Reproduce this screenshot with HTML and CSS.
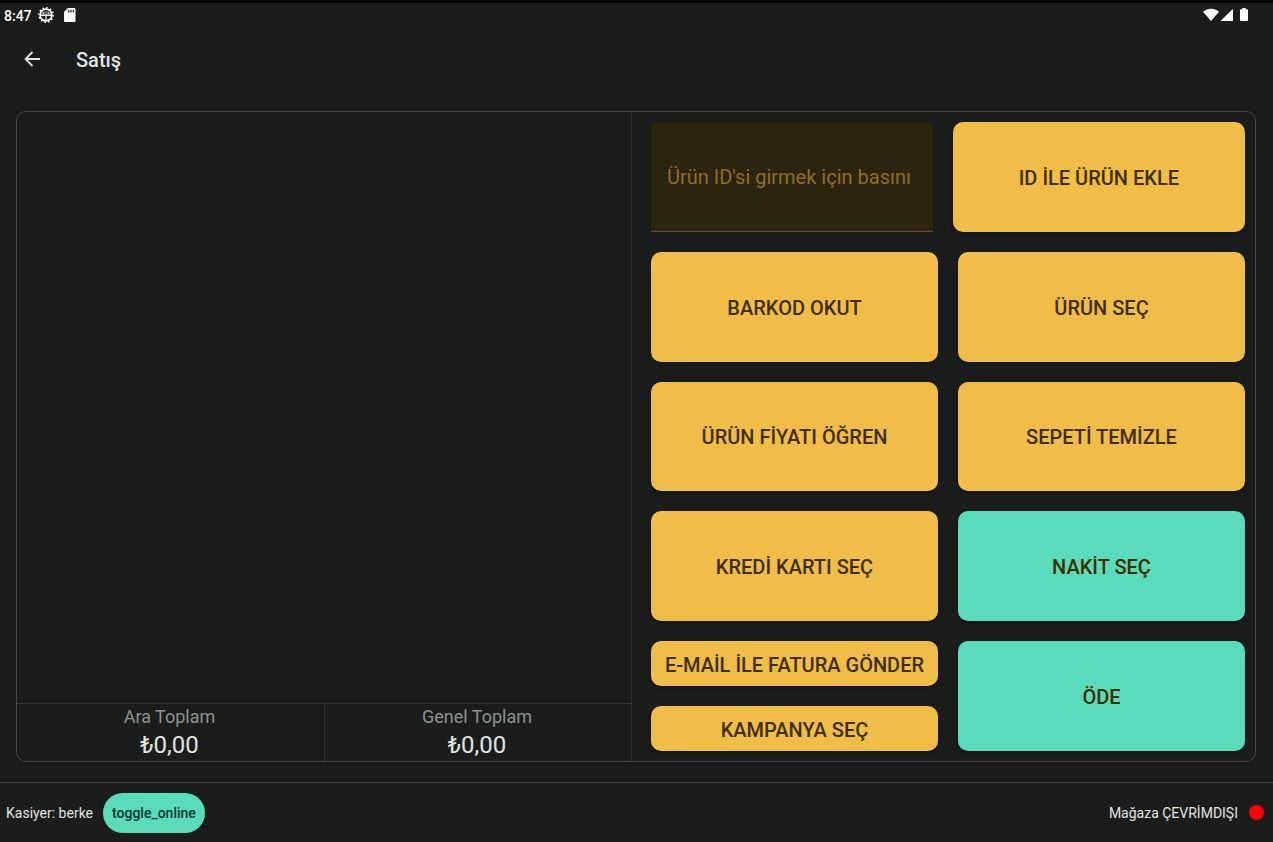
FILE: index.html
```html
<!DOCTYPE html>
<html lang="tr">
<head>
<meta charset="utf-8">
<meta name="viewport" content="width=device-width, initial-scale=1">
<title>Satış</title>
<link rel="stylesheet" href="styles.css">
</head>
<body>
<div class="status-bar">
  <div class="status-group">
    <span class="clock">8:47</span>
    <svg class="status-icon" width="16" height="16" viewBox="0 0 16 16" aria-hidden="true">
      <circle cx="8" cy="8" r="7.200" fill="none" stroke="#fff" stroke-width="1.400" stroke-dasharray="1.600 2.170"/>
      <circle cx="8" cy="8" r="5.900" fill="none" stroke="#fff" stroke-width="1.600"/>
      <path d="M2.500 8.200h11" stroke="#fff" stroke-width="1.400"/>
      <path d="M8 8.200V13.500" stroke="#fff" stroke-width="1.200"/>
      <path d="M3.500 7.500a4.500 3.500 0 0 1 9 0z" fill="#fff" opacity=".3"/>
      <path d="M5.500 5.500v1.200M10.500 5.500v1.200" stroke="#fff" stroke-width="1"/>
    </svg>
    <svg class="card-icon" width="12" height="14" viewBox="0 0 12 14" aria-hidden="true">
      <path d="M4 0h6.500A1.200 1.200 0 0 1 11.500 1.200v11.600a1.200 1.200 0 0 1-1.200 1.200H1.200A1.200 1.200 0 0 1 0 12.800V4z" fill="#fff"/>
      <path d="M4.700 1.800v2.800M7 1.800v2.800M9.300 1.800v2.800" stroke="#1b1d1c" stroke-width="1.200"/>
    </svg>
  </div>
  <div class="status-group status-right">
    <svg width="16" height="14" viewBox="0 0 16 14" aria-hidden="true"><path d="M0 3.700C4.500-.3 11.500-.3 16 3.700L8 13z" fill="#fff"/></svg>
    <svg width="13" height="14" viewBox="0 0 13 14" aria-hidden="true"><path d="M13 .8V13H.5z" fill="#fff"/></svg>
    <svg class="battery" width="8" height="14" viewBox="0 0 8 14" aria-hidden="true"><path d="M2.300 0h3.400v1.300H7a1 1 0 0 1 1 1V12a1 1 0 0 1-1 1H1a1 1 0 0 1-1-1V2.300a1 1 0 0 1 1-1h1.300z" fill="#fff"/></svg>
  </div>
</div>
<header class="app-bar">
  <button class="back" type="button" aria-label="Geri">
    <svg width="16" height="16" viewBox="0 0 16 16" aria-hidden="true"><path d="M16 8H1.500M8.500 1 1.500 8l7 7" fill="none" stroke="#e1e3e1" stroke-width="1.800"/></svg>
  </button>
  <h1 class="title">Satış</h1>
</header>
<main class="content">
  <section class="panel">
    <div class="cart">
      <div class="cart-list"></div>
      <div class="totals">
        <div class="total"><span class="total-label">Ara Toplam</span><span class="total-value">₺0,00</span></div>
        <div class="total"><span class="total-label">Genel Toplam</span><span class="total-value">₺0,00</span></div>
      </div>
    </div>
    <div class="actions">
      <form class="row id-row">
        <input class="id-input" type="text" aria-label="Ürün ID" placeholder="Ürün ID'si girmek için basını">
        <button class="action" type="button">ID İLE ÜRÜN EKLE</button>
      </form>
      <div class="row">
        <button class="action" type="button">BARKOD OKUT</button>
        <button class="action" type="button">ÜRÜN SEÇ</button>
      </div>
      <div class="row">
        <button class="action" type="button">ÜRÜN FİYATI ÖĞREN</button>
        <button class="action" type="button">SEPETİ TEMİZLE</button>
      </div>
      <div class="row">
        <button class="action" type="button">KREDİ KARTI SEÇ</button>
        <button class="action pay" type="button">NAKİT SEÇ</button>
      </div>
      <div class="row">
        <div class="stack">
          <button class="action" type="button">E-MAİL İLE FATURA GÖNDER</button>
          <button class="action" type="button">KAMPANYA SEÇ</button>
        </div>
        <button class="action pay" type="button">ÖDE</button>
      </div>
    </div>
  </section>
</main>
<footer class="footer">
  <span>Kasiyer: berke</span>
  <button class="toggle" type="button">toggle_online</button>
  <span class="store">Mağaza ÇEVRİMDIŞI</span>
  <span class="dot"></span>
</footer>
</body>
</html>
```

FILE: styles.css
```css
* { box-sizing: border-box; }
body {
  margin: 0;
  min-height: 100vh;
  display: flex;
  flex-direction: column;
  background: #1b1d1c;
  color: #e1e3e1;
  font-family: Roboto, "Liberation Sans", sans-serif;
  font-size: 14px;
}
button, input { font: inherit; border: 0; margin: 0; }
svg { display: block; }
.status-bar {
  display: flex;
  justify-content: space-between;
  border-top: 3px solid #000;
  height: 27px;
  padding: 0 25px 0 4px;
  color: #fff;
}
.status-group { display: flex; align-items: center; }
.clock { font-weight: 500; padding-top: 1px; }
.status-icon { margin-left: 6px; }
.card-icon { margin-left: 10px; }
.status-right { gap: 1px; }
.battery { margin-left: 6px; }
.app-bar {
  display: flex;
  align-items: center;
  height: 65px;
  padding: 0 16px;
  border-bottom: 1px solid #191b1a;
}
.back {
  width: 32px;
  height: 32px;
  display: grid;
  place-items: center;
  padding: 0;
  background: none;
}
.title { margin: 0 0 0 28px; padding-top: 1px; font-size: 20px; font-weight: 500; line-height: 24px; }
.content {
  flex: 1;
  display: flex;
  padding: 19px 17px 20px 16px;
}
.panel {
  flex: 1;
  display: grid;
  grid-template-columns: 1fr 1fr;
  border: 1px solid #3f4946;
  border-radius: 10px;
}
.cart {
  display: flex;
  flex-direction: column;
  min-width: 0;
  margin-right: 4px;
  border-right: 1px solid #2e3432;
}
.cart-list { flex: 1; }
.totals {
  display: grid;
  grid-template-columns: 1fr 1fr;
  border-top: 1px solid #2e3432;
}
.total { display: flex; flex-direction: column; align-items: center; padding: 1px 2px 0 0; }
.total + .total { border-left: 1px solid #2e3432; }
.total-label { font-size: 18px; line-height: 24px; color: #89938f; }
.total-value { font-size: 24px; line-height: 32px; }
.actions {
  min-width: 0;
  display: grid;
  grid-template-rows: repeat(5, minmax(0, 1fr));
  gap: 20px;
  padding: 10px 10px 10px 15px;
}
.row { display: grid; grid-template-columns: repeat(2, minmax(0, 1fr)); gap: 20px; }
.id-row { grid-template-columns: minmax(0, 27fr) minmax(0, 28fr); }
.action {
  min-width: 0;
  padding: 2px 8px 0;
  background: #f0be48;
  color: #3f2e00;
  border-radius: 10px;
  font-size: 20px;
  font-weight: 500;
  white-space: nowrap;
  box-shadow: 0 2px 4px rgba(0, 0, 0, .3);
}
.pay { background: #5adbbc; }
.stack { display: grid; grid-template-rows: 1fr 1fr; gap: 20px; min-width: 0; }
.id-input {
  width: 100%;
  min-width: 0;
  padding: 2px 16px 0;
  background: #2b240e;
  color: #f0be48;
  border-bottom: 1px solid #67501f;
  border-radius: 4px 4px 0 0;
  font-size: 20px;
}
.id-input::placeholder { color: #8d6f2b; opacity: 1; }
.footer {
  display: flex;
  align-items: center;
  height: 60px;
  padding: 0 9px 0 6px;
  border-top: 1px solid #3f4946;
}
.toggle {
  margin-left: 10px;
  height: 40px;
  padding: 1px 9px 0;
  border-radius: 20px;
  background: #5adbbc;
  color: #00382d;
  font-weight: 500;
}
.store { margin-left: auto; }
.dot { width: 15px; height: 15px; margin-left: 11px; border-radius: 50%; background: #f00; }
```
